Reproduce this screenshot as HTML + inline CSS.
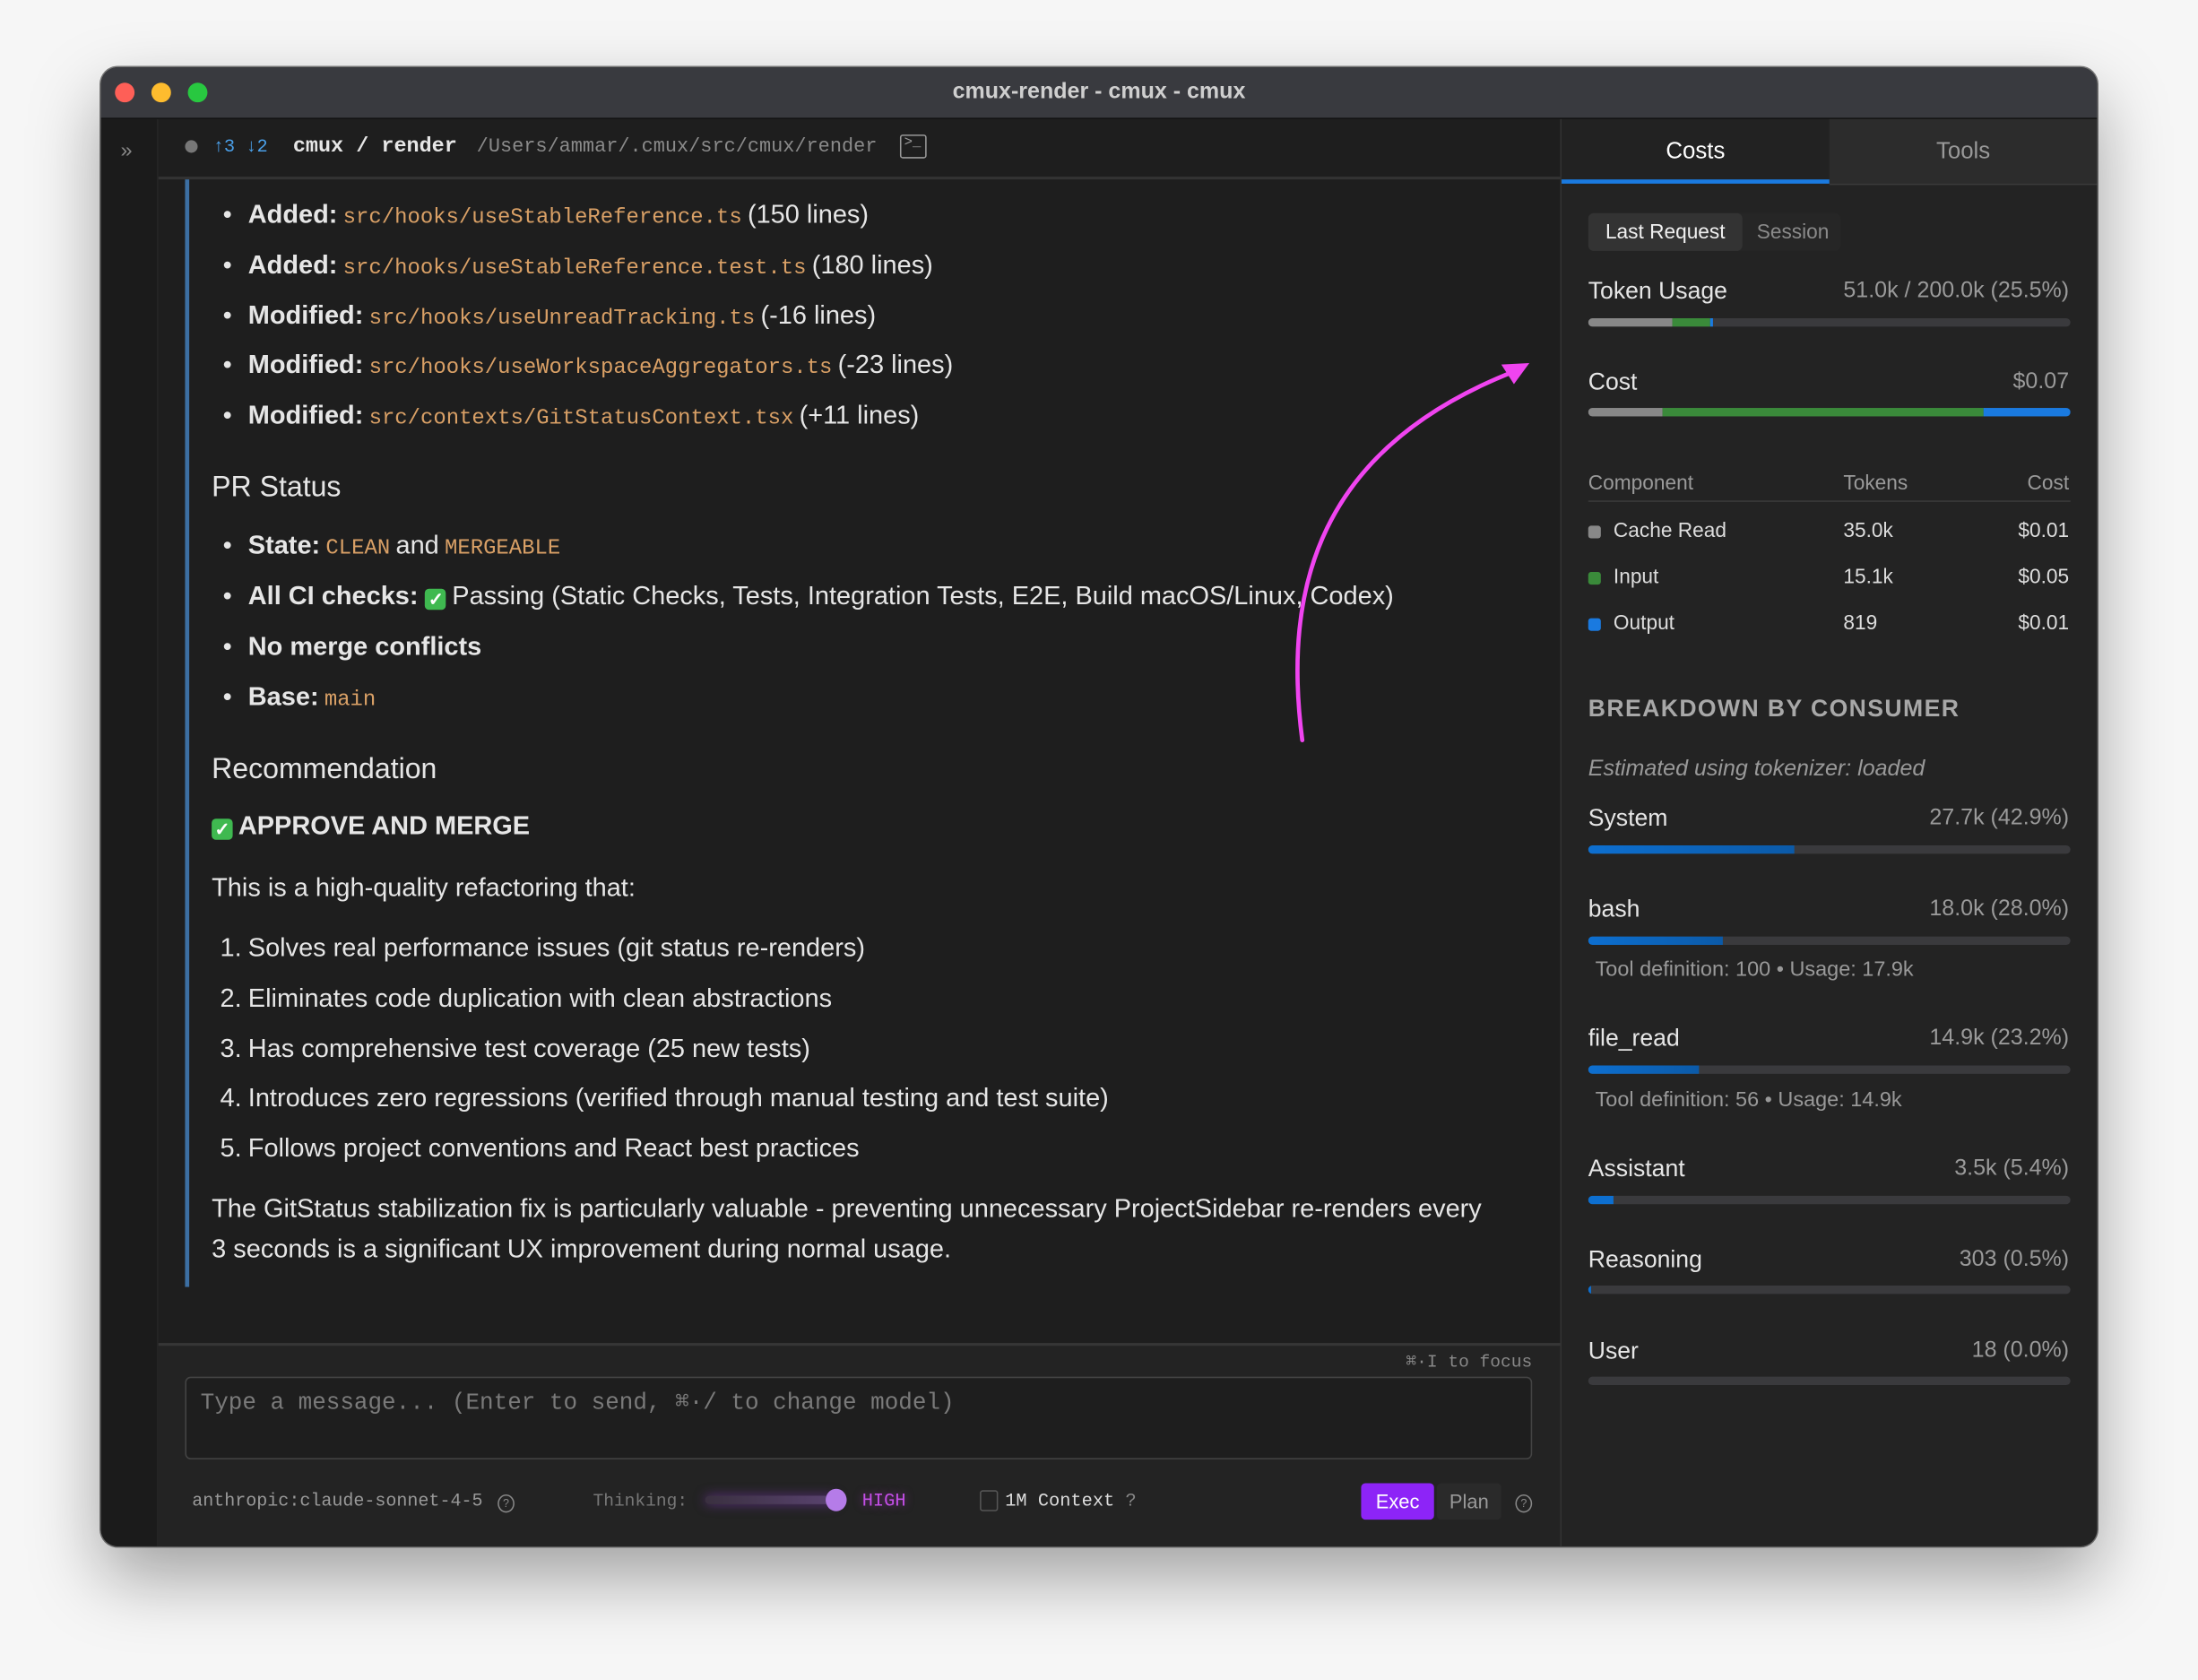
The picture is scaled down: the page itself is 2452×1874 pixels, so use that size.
<!DOCTYPE html>
<html><head><meta charset="utf-8">
<style>
html,body{margin:0;padding:0;width:2452px;height:1874px;overflow:hidden;background:#f6f6f6;}
#s{position:absolute;left:0;top:0;width:1568px;height:1198px;transform:scale(1.56378);transform-origin:0 0;font-family:"Liberation Sans",sans-serif;}
.a{position:absolute;white-space:nowrap;line-height:20px;}
.m{font-family:"Liberation Mono",monospace;}
.win{position:absolute;left:72px;top:48px;width:1424px;height:1055px;border-radius:12px;overflow:hidden;background:#1e1e1e;box-shadow:0 22px 50px rgba(0,0,0,.35),0 0 0 1px rgba(0,0,0,.5);}
.o{color:#d9a066;font-size:15.3px;margin-left:4px;margin-right:4px;}
.w{color:#e6e6e6;}
.b{font-weight:bold;}
.chk{display:inline-block;width:15px;height:15px;background:#3fb950;border-radius:3px;color:#fff;font-size:13px;line-height:15px;text-align:center;vertical-align:-1px;font-weight:bold;margin-right:4px;}
.bar{position:absolute;height:6px;border-radius:3px;background:#3a3a3d;overflow:hidden;}
.bar i{position:absolute;top:0;height:100%;}
.g{color:#9a9a9a;}
</style></head><body>
<div id="s">
<div class="win">
  <div style="position:absolute;left:0;top:0;width:1424px;height:36px;background:#393a3f;border-bottom:1px solid #111;"></div>
  <div style="position:absolute;left:10px;top:11px;width:14px;height:14px;border-radius:50%;background:#fe5f57;"></div>
  <div style="position:absolute;left:36px;top:11px;width:14px;height:14px;border-radius:50%;background:#febc2e;"></div>
  <div style="position:absolute;left:62px;top:11px;width:14px;height:14px;border-radius:50%;background:#28c840;"></div>
  <div class="a b" style="left:0;width:1424px;text-align:center;top:8px;color:#cfcfcf;font-size:16px;">cmux-render - cmux - cmux</div>
  <div style="position:absolute;left:0;top:37px;width:40px;height:1018px;background:#1b1b1b;border-right:1px solid #262626;"></div>
  <div class="a" style="left:14px;top:50px;color:#888;font-size:15px;">»</div>
  <div style="position:absolute;left:41px;top:78px;width:1000px;height:2px;background:#333;"></div>
  <div style="position:absolute;left:60px;top:52px;width:9px;height:9px;border-radius:50%;background:#777;"></div>
  <div class="a m" style="left:80px;top:47px;color:#4a9fe8;font-size:13px;">↑3 ↓2</div>
  <div class="a m b w" style="left:137px;top:47px;font-size:15px;">cmux / render</div>
  <div class="a m" style="left:268px;top:47px;color:#8a8a8a;font-size:14px;">/Users/ammar/.cmux/src/cmux/render</div>
  <div style="position:absolute;left:570px;top:48px;width:17px;height:15px;border:1.5px solid #999;border-radius:2px;"></div>
  <div class="a m" style="left:573px;top:45px;color:#999;font-size:10px;">&gt;_</div>
  <div style="position:absolute;left:60px;top:80px;width:3px;height:790px;background:#3c6fa3;"></div>
  <div style="position:absolute;left:0;top:0;font-size:18.5px;color:#e6e6e6;">
    <div class="a" style="left:87px;top:95px;">•</div><div class="a" style="left:105px;top:95px;"><b>Added:</b><span class="m o">src/hooks/useStableReference.ts</span>(150 lines)</div>
    <div class="a" style="left:87px;top:131px;">•</div><div class="a" style="left:105px;top:131px;"><b>Added:</b><span class="m o">src/hooks/useStableReference.test.ts</span>(180 lines)</div>
    <div class="a" style="left:87px;top:167px;">•</div><div class="a" style="left:105px;top:167px;"><b>Modified:</b><span class="m o">src/hooks/useUnreadTracking.ts</span>(-16 lines)</div>
    <div class="a" style="left:87px;top:202px;">•</div><div class="a" style="left:105px;top:202px;"><b>Modified:</b><span class="m o">src/hooks/useWorkspaceAggregators.ts</span>(-23 lines)</div>
    <div class="a" style="left:87px;top:238px;">•</div><div class="a" style="left:105px;top:238px;"><b>Modified:</b><span class="m o">src/contexts/GitStatusContext.tsx</span>(+11 lines)</div>

    <div class="a" style="left:79px;top:290px;font-size:20.5px;">PR Status</div>
    <div class="a" style="left:87px;top:331px;">•</div><div class="a" style="left:105px;top:331px;"><b>State:</b><span class="m o">CLEAN</span>and<span class="m o">MERGEABLE</span></div>
    <div class="a" style="left:87px;top:367px;">•</div><div class="a" style="left:105px;top:367px;"><b>All CI checks:</b> <span class="chk">✓</span>Passing (Static Checks, Tests, Integration Tests, E2E, Build macOS/Linux, Codex)</div>
    <div class="a" style="left:87px;top:403px;">•</div><div class="a b" style="left:105px;top:403px;">No merge conflicts</div>
    <div class="a" style="left:87px;top:439px;">•</div><div class="a" style="left:105px;top:439px;"><b>Base:</b><span class="m o">main</span></div>

    <div class="a" style="left:79px;top:491px;font-size:20.5px;">Recommendation</div>
    <div class="a b" style="left:79px;top:531px;"><span class="chk">✓</span>APPROVE AND MERGE</div>
    <div class="a" style="left:79px;top:575px;">This is a high-quality refactoring that:</div>
    <div class="a" style="left:85px;top:618px;">1.</div><div class="a" style="left:105px;top:618px;">Solves real performance issues (git status re-renders)</div>
    <div class="a" style="left:85px;top:654px;">2.</div><div class="a" style="left:105px;top:654px;">Eliminates code duplication with clean abstractions</div>
    <div class="a" style="left:85px;top:690px;">3.</div><div class="a" style="left:105px;top:690px;">Has comprehensive test coverage (25 new tests)</div>
    <div class="a" style="left:85px;top:725px;">4.</div><div class="a" style="left:105px;top:725px;">Introduces zero regressions (verified through manual testing and test suite)</div>
    <div class="a" style="left:85px;top:761px;">5.</div><div class="a" style="left:105px;top:761px;">Follows project conventions and React best practices</div>
    <div class="a" style="left:79px;top:804px;">The GitStatus stabilization fix is particularly valuable - preventing unnecessary ProjectSidebar re-renders every</div>
    <div class="a" style="left:79px;top:833px;">3 seconds is a significant UX improvement during normal usage.</div>
  </div>
  <div style="position:absolute;left:41px;top:910px;width:1000px;height:145px;background:#232323;border-top:2px solid #363636;"></div>
  <div class="a m" style="left:900px;top:914px;width:121px;text-align:right;color:#888;font-size:12.5px;">⌘·I to focus</div>
  <div style="position:absolute;left:60px;top:934px;width:959px;height:57px;border:1.5px solid #444;border-radius:4px;background:#1e1e1e;"></div>
  <div class="a m" style="left:71px;top:943px;color:#7a7a7a;font-size:16.6px;">Type a message... (Enter to send, ⌘·/ to change model)</div>
  <div class="a m" style="left:65px;top:1013px;color:#999;font-size:12.8px;">anthropic:claude-sonnet-4-5</div>
  <div style="position:absolute;left:283px;top:1018px;width:10px;height:11px;border:1px solid #888;border-radius:50%;font-size:8px;color:#888;text-align:center;line-height:11px;">?</div>
  <div class="a m" style="left:351px;top:1013px;color:#777;font-size:12.5px;">Thinking:</div>
  <div style="position:absolute;left:431px;top:1019px;width:94px;height:6px;border-radius:3px;background:linear-gradient(90deg,#3a3040,#5a4370);box-shadow:0 0 8px rgba(150,60,220,.5);"></div>
  <div style="position:absolute;left:517px;top:1014px;width:15px;height:16px;border-radius:50%;background:#b57ce8;"></div>
  <div class="a m" style="left:543px;top:1013px;color:#c34ee6;font-size:13px;text-shadow:0 0 6px rgba(200,60,230,.5);">HIGH</div>
  <div style="position:absolute;left:627px;top:1015px;width:11px;height:13px;border:1.5px solid #555;border-radius:2px;"></div>
  <div class="a m" style="left:645px;top:1013px;color:#ddd;font-size:13px;">1M Context <span style="color:#888">?</span></div>
  <div style="position:absolute;left:899px;top:1010px;width:52px;height:26px;border-radius:3px;background:#8d24f7;"></div>
  <div class="a" style="left:899px;top:1013px;width:52px;text-align:center;color:#fff;font-size:14px;">Exec</div>
  <div style="position:absolute;left:953px;top:1010px;width:46px;height:26px;border-radius:3px;background:#2a2a2a;"></div>
  <div class="a" style="left:953px;top:1013px;width:46px;text-align:center;color:#999;font-size:14px;">Plan</div>
  <div style="position:absolute;left:1009px;top:1018px;width:10px;height:11px;border:1px solid #888;border-radius:50%;font-size:8px;color:#888;text-align:center;line-height:11px;">?</div>

  <div style="position:absolute;left:1041px;top:37px;width:383px;height:1018px;background:#232323;border-left:1px solid #333;"></div>
  <div style="position:absolute;left:1042px;top:37px;width:191px;height:47px;background:#222;"></div>
  <div style="position:absolute;left:1233px;top:37px;width:191px;height:46px;background:#2c2c2c;border-bottom:1px solid #3a3a3a;"></div>
  <div style="position:absolute;left:1042px;top:80px;width:191px;height:3px;background:#1a7ae0;"></div>
  <div class="a" style="left:1042px;top:50px;width:191px;text-align:center;color:#fff;font-size:16.5px;">Costs</div>
  <div class="a" style="left:1233px;top:50px;width:191px;text-align:center;color:#999;font-size:16.5px;">Tools</div>

  <div style="position:absolute;left:1061px;top:104px;width:180px;height:27px;border-radius:4px;background:#262626;"></div>
  <div style="position:absolute;left:1061px;top:104px;width:110px;height:27px;border-radius:4px;background:#333;"></div>
  <div class="a" style="left:1061px;top:108px;width:110px;text-align:center;color:#f0f0f0;font-size:14.5px;">Last Request</div>
  <div class="a" style="left:1171px;top:108px;width:72px;text-align:center;color:#8a8a8a;font-size:14.5px;">Session</div>

  <div class="a w" style="left:1061px;top:150px;font-size:17px;">Token Usage</div>
  <div class="a g" style="right:20px;top:150px;font-size:16px;">51.0k / 200.0k (25.5%)</div>
  <div class="bar" style="left:1061px;top:179px;width:344px;"><i style="left:0;width:60px;background:#888;"></i><i style="left:60px;width:27px;background:#3a8a3a;"></i><i style="left:87px;width:2px;background:#1a7ae0;"></i></div>

  <div class="a w" style="left:1061px;top:215px;font-size:17px;">Cost</div>
  <div class="a g" style="right:20px;top:215px;font-size:16px;">$0.07</div>
  <div class="bar" style="left:1061px;top:243px;width:344px;"><i style="left:0;width:53px;background:#888;"></i><i style="left:53px;width:229px;background:#3a8a3a;"></i><i style="left:282px;width:62px;background:#1a7ae0;"></i></div>

  <div class="a g" style="left:1061px;top:287px;font-size:14.5px;">Component</div>
  <div class="a g" style="left:1243px;top:287px;font-size:14.5px;">Tokens</div>
  <div class="a g" style="right:20px;top:287px;font-size:14.5px;">Cost</div>
  <div style="position:absolute;left:1061px;top:309px;width:344px;height:1px;background:#3a3a3a;"></div>
  <div style="position:absolute;left:1061px;top:327px;width:9px;height:9px;border-radius:2px;background:#888;"></div>
  <div class="a" style="left:1079px;top:321px;color:#ddd;font-size:14.5px;">Cache Read</div>
  <div class="a" style="left:1243px;top:321px;color:#ddd;font-size:14.5px;">35.0k</div>
  <div class="a" style="right:20px;top:321px;color:#ddd;font-size:14.5px;">$0.01</div>
  <div style="position:absolute;left:1061px;top:360px;width:9px;height:9px;border-radius:2px;background:#3a8a3a;"></div>
  <div class="a" style="left:1079px;top:354px;color:#ddd;font-size:14.5px;">Input</div>
  <div class="a" style="left:1243px;top:354px;color:#ddd;font-size:14.5px;">15.1k</div>
  <div class="a" style="right:20px;top:354px;color:#ddd;font-size:14.5px;">$0.05</div>
  <div style="position:absolute;left:1061px;top:393px;width:9px;height:9px;border-radius:2px;background:#1a7ae0;"></div>
  <div class="a" style="left:1079px;top:387px;color:#ddd;font-size:14.5px;">Output</div>
  <div class="a" style="left:1243px;top:387px;color:#ddd;font-size:14.5px;">819</div>
  <div class="a" style="right:20px;top:387px;color:#ddd;font-size:14.5px;">$0.01</div>

  <div class="a b" style="left:1061px;top:448px;color:#a8a8a8;font-size:17px;letter-spacing:0.9px;">BREAKDOWN BY CONSUMER</div>
  <div class="a" style="left:1061px;top:491px;color:#999;font-size:16px;font-style:italic;">Estimated using tokenizer: loaded</div>

  <div class="a w" style="left:1061px;top:526px;font-size:17px;">System</div>
  <div class="a g" style="right:20px;top:526px;font-size:16px;">27.7k (42.9%)</div>
  <div class="bar" style="left:1061px;top:555px;width:344px;"><i style="left:0;width:147px;background:linear-gradient(90deg,#0d6fd0,#0b5aa8);"></i></div>

  <div class="a w" style="left:1061px;top:591px;font-size:17px;">bash</div>
  <div class="a g" style="right:20px;top:591px;font-size:16px;">18.0k (28.0%)</div>
  <div class="bar" style="left:1061px;top:620px;width:344px;"><i style="left:0;width:96px;background:linear-gradient(90deg,#0d6fd0,#0b5aa8);"></i></div>
  <div class="a" style="left:1066px;top:634px;color:#999;font-size:15px;">Tool definition: 100 • Usage: 17.9k</div>

  <div class="a w" style="left:1061px;top:683px;font-size:17px;">file_read</div>
  <div class="a g" style="right:20px;top:683px;font-size:16px;">14.9k (23.2%)</div>
  <div class="bar" style="left:1061px;top:712px;width:344px;"><i style="left:0;width:79px;background:linear-gradient(90deg,#0d6fd0,#0b5aa8);"></i></div>
  <div class="a" style="left:1066px;top:727px;color:#999;font-size:15px;">Tool definition: 56 • Usage: 14.9k</div>

  <div class="a w" style="left:1061px;top:776px;font-size:17px;">Assistant</div>
  <div class="a g" style="right:20px;top:776px;font-size:16px;">3.5k (5.4%)</div>
  <div class="bar" style="left:1061px;top:805px;width:344px;"><i style="left:0;width:18px;background:#0d6fd0;"></i></div>

  <div class="a w" style="left:1061px;top:841px;font-size:17px;">Reasoning</div>
  <div class="a g" style="right:20px;top:841px;font-size:16px;">303 (0.5%)</div>
  <div class="bar" style="left:1061px;top:869px;width:344px;"><i style="left:0;width:2px;background:#0d6fd0;"></i></div>

  <div class="a w" style="left:1061px;top:906px;font-size:17px;">User</div>
  <div class="a g" style="right:20px;top:906px;font-size:16px;">18 (0.0%)</div>
  <div class="bar" style="left:1061px;top:934px;width:344px;"></div>
</div>
<svg style="position:absolute;left:0;top:0;" width="1568" height="1198" viewBox="0 0 1568 1198">
  <path d="M929 528 C 915 420, 940 320, 1080 265" fill="none" stroke="#f044f0" stroke-width="3" stroke-linecap="round"/>
  <path d="M1091 259 L1071 260 L1080 274 Z" fill="#f044f0"/>
</svg>
</div>
</body></html>
